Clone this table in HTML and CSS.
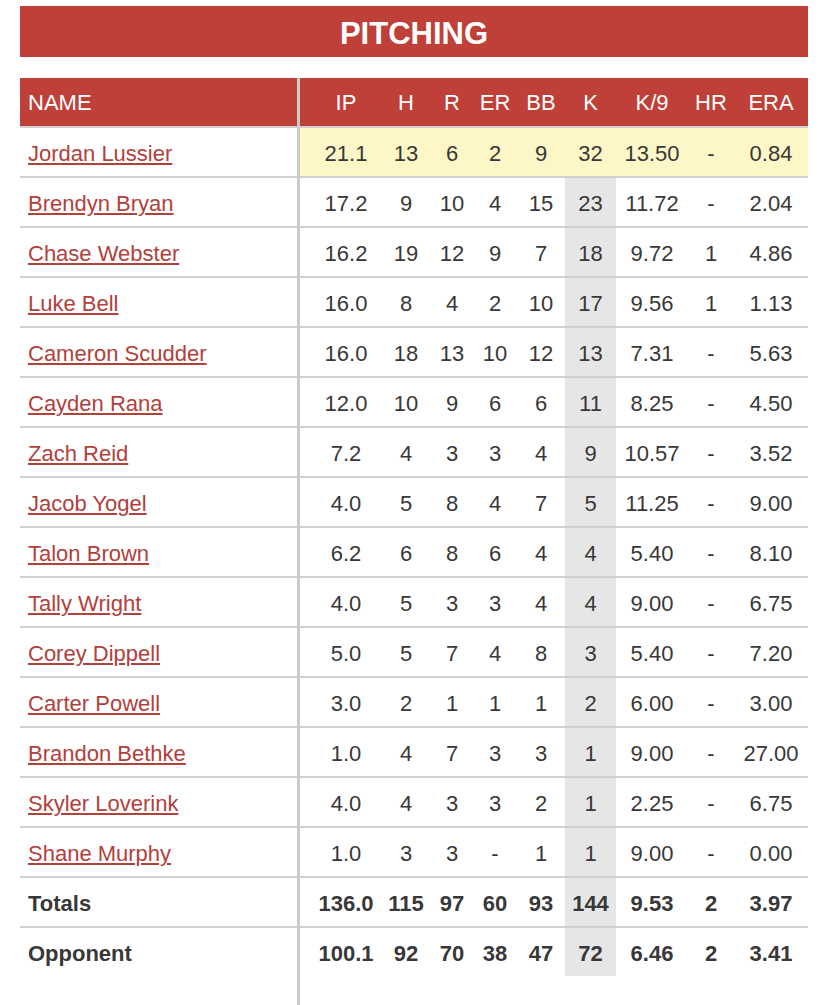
FILE: index.html
```html
<!DOCTYPE html>
<html>
<head>
<meta charset="utf-8">
<link rel="stylesheet" href="styles.css">
</head>
<body>
<div class="page">
  <div class="title">PITCHING</div>
  <table class="stats">
    <thead>
      <tr>
        <th class="name c-name">NAME</th>
        <th class="c-ip">IP</th>
        <th class="c-h">H</th>
        <th class="c-r">R</th>
        <th class="c-er">ER</th>
        <th class="c-bb">BB</th>
        <th class="c-k">K</th>
        <th class="c-k9">K/9</th>
        <th class="c-hr">HR</th>
        <th class="c-era">ERA</th>
      </tr>
    </thead>
    <tbody>
      <tr class="hl"><td class="name"><a href="#">Jordan Lussier</a></td><td class="ip">21.1</td><td>13</td><td>6</td><td>2</td><td>9</td><td class="k">32</td><td>13.50</td><td>-</td><td>0.84</td></tr>
      <tr><td class="name"><a href="#">Brendyn Bryan</a></td><td class="ip">17.2</td><td>9</td><td>10</td><td>4</td><td>15</td><td class="k">23</td><td>11.72</td><td>-</td><td>2.04</td></tr>
      <tr><td class="name"><a href="#">Chase Webster</a></td><td class="ip">16.2</td><td>19</td><td>12</td><td>9</td><td>7</td><td class="k">18</td><td>9.72</td><td>1</td><td>4.86</td></tr>
      <tr><td class="name"><a href="#">Luke Bell</a></td><td class="ip">16.0</td><td>8</td><td>4</td><td>2</td><td>10</td><td class="k">17</td><td>9.56</td><td>1</td><td>1.13</td></tr>
      <tr><td class="name"><a href="#">Cameron Scudder</a></td><td class="ip">16.0</td><td>18</td><td>13</td><td>10</td><td>12</td><td class="k">13</td><td>7.31</td><td>-</td><td>5.63</td></tr>
      <tr><td class="name"><a href="#">Cayden Rana</a></td><td class="ip">12.0</td><td>10</td><td>9</td><td>6</td><td>6</td><td class="k">11</td><td>8.25</td><td>-</td><td>4.50</td></tr>
      <tr><td class="name"><a href="#">Zach Reid</a></td><td class="ip">7.2</td><td>4</td><td>3</td><td>3</td><td>4</td><td class="k">9</td><td>10.57</td><td>-</td><td>3.52</td></tr>
      <tr><td class="name"><a href="#">Jacob Yogel</a></td><td class="ip">4.0</td><td>5</td><td>8</td><td>4</td><td>7</td><td class="k">5</td><td>11.25</td><td>-</td><td>9.00</td></tr>
      <tr><td class="name"><a href="#">Talon Brown</a></td><td class="ip">6.2</td><td>6</td><td>8</td><td>6</td><td>4</td><td class="k">4</td><td>5.40</td><td>-</td><td>8.10</td></tr>
      <tr><td class="name"><a href="#">Tally Wright</a></td><td class="ip">4.0</td><td>5</td><td>3</td><td>3</td><td>4</td><td class="k">4</td><td>9.00</td><td>-</td><td>6.75</td></tr>
      <tr><td class="name"><a href="#">Corey Dippell</a></td><td class="ip">5.0</td><td>5</td><td>7</td><td>4</td><td>8</td><td class="k">3</td><td>5.40</td><td>-</td><td>7.20</td></tr>
      <tr><td class="name"><a href="#">Carter Powell</a></td><td class="ip">3.0</td><td>2</td><td>1</td><td>1</td><td>1</td><td class="k">2</td><td>6.00</td><td>-</td><td>3.00</td></tr>
      <tr><td class="name"><a href="#">Brandon Bethke</a></td><td class="ip">1.0</td><td>4</td><td>7</td><td>3</td><td>3</td><td class="k">1</td><td>9.00</td><td>-</td><td>27.00</td></tr>
      <tr><td class="name"><a href="#">Skyler Loverink</a></td><td class="ip">4.0</td><td>4</td><td>3</td><td>3</td><td>2</td><td class="k">1</td><td>2.25</td><td>-</td><td>6.75</td></tr>
      <tr><td class="name"><a href="#">Shane Murphy</a></td><td class="ip">1.0</td><td>3</td><td>3</td><td>-</td><td>1</td><td class="k">1</td><td>9.00</td><td>-</td><td>0.00</td></tr>
      <tr class="tot"><td class="name">Totals</td><td class="ip">136.0</td><td>115</td><td>97</td><td>60</td><td>93</td><td class="k">144</td><td>9.53</td><td>2</td><td>3.97</td></tr>
      <tr class="tot last"><td class="name">Opponent</td><td class="ip">100.1</td><td>92</td><td>70</td><td>38</td><td>47</td><td class="k">72</td><td>6.46</td><td>2</td><td>3.41</td></tr>
    </tbody>
  </table>
  <div class="tail"></div>
</div>
</body>
</html>
```

FILE: styles.css
```css
html, body {
  margin: 0;
  padding: 0;
  background: #ffffff;
}

body {
  font-family: "Liberation Sans", Arial, Helvetica, sans-serif;
  color: #383838;
}

.page {
  padding: 6px 20px 0 20px;
  width: 788px;
}

.title {
  background: #bf4038;
  color: #ffffff;
  font-weight: bold;
  font-size: 31px;
  height: 51px;
  line-height: 55px;
  text-align: center;
  margin-bottom: 21px;
}

.stats {
  width: 788px;
  border-collapse: separate;
  border-spacing: 0;
  table-layout: fixed;
  font-size: 22px;
}

.stats th,
.stats td {
  box-sizing: border-box;
  padding: 0;
  text-align: center;
  vertical-align: middle;
  white-space: nowrap;
}

.stats th {
  background: #bf4038;
  color: #ffffff;
  font-weight: normal;
  height: 50px;
  border-bottom: 2px solid #d2d2d2;
  padding-top: 2px;
}

.stats td {
  height: 50px;
  border-bottom: 2px solid #d0d0d0;
  padding-top: 4px;
}

.stats tr.last td {
  border-bottom: none;
  height: 48px;
  padding-top: 4px;
}

.stats .name {
  text-align: left;
  padding-left: 8px;
  border-right: 3px solid #cbcbcb;
}

.c-name { width: 280px; }
.c-ip { width: 81px; padding-left: 11px !important; }
.c-h { width: 50px; }
.c-r { width: 42px; }
.c-er { width: 44px; }
.c-bb { width: 48px; }
.c-k { width: 51px; }
.c-k9 { width: 72px; }
.c-hr { width: 46px; }
.c-era { width: 74px; }

.stats td.ip {
  padding-left: 11px;
}

.stats td.k {
  background: #e6e6e6;
}

.stats tr.hl td:not(.name) {
  background: #fdf6c6;
}

.stats a {
  color: #b2403b;
  text-decoration: underline;
  text-decoration-thickness: 1.5px;
  text-underline-offset: 2px;
}

.stats tr.tot td {
  font-weight: bold;
}

.tail {
  width: 280px;
  box-sizing: border-box;
  height: 40px;
  border-right: 3px solid #cbcbcb;
}
```
